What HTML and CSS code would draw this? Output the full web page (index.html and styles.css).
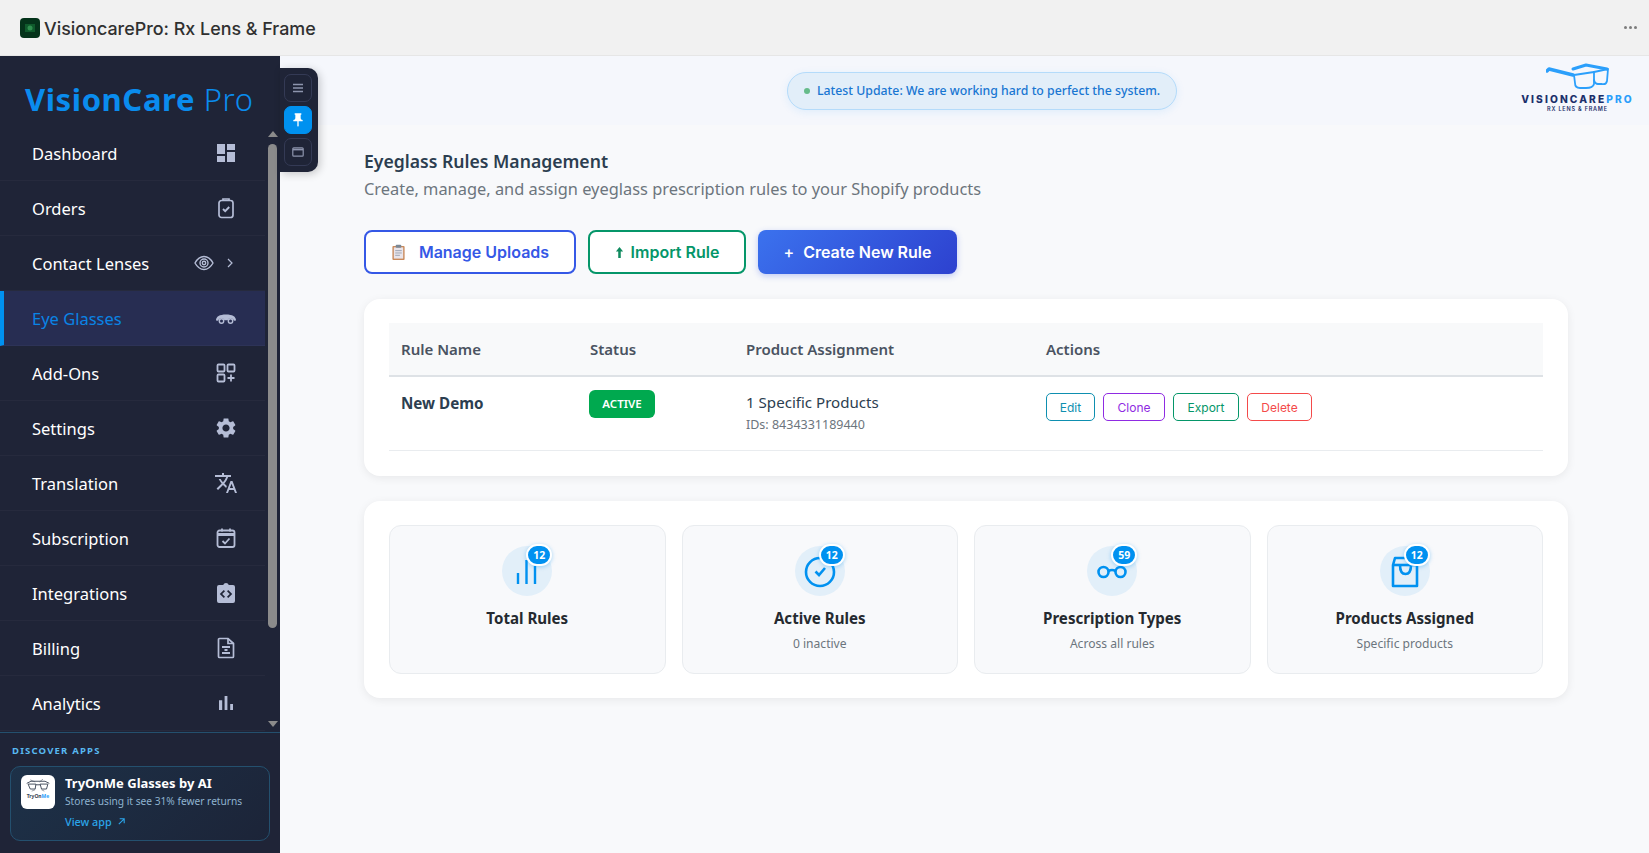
FILE: index.html
```html
<!DOCTYPE html>
<html lang="en">
<head>
  <meta charset="UTF-8">
  <title>VisioncarePro: Rx Lens &amp; Frame</title>
  <link rel="stylesheet" href="styles.css">
</head>
<body>
  <header class="topbar">
    <span class="app-icon">
      <svg viewBox="0 0 20 20" width="20" height="20"><rect x="5" y="6" width="10" height="8" fill="#0f5a2c"/><circle cx="10" cy="10" r="2.5" fill="#2f8f4f"/></svg>
    </span>
    <span class="app-title">VisioncarePro: Rx Lens &amp; Frame</span>
    <span class="more"><i></i><i></i><i></i></span>
  </header>

  <div class="layout">
    <aside class="sidebar">
      <div class="brand"><b>VisionCare</b> Pro</div>

      <nav class="nav">
        <a class="nav-item"><span>Dashboard</span>
          <svg class="nav-icon" viewBox="0 0 24 24"><path fill="currentColor" d="M3 13h8V3H3v10zm0 8h8v-6H3v6zm10 0h8V11h-8v10zm0-18v6h8V3h-8z"/></svg></a>
        <a class="nav-item"><span>Orders</span>
          <svg class="nav-icon" viewBox="0 0 24 24" fill="none" stroke="currentColor" stroke-width="1.7"><rect x="5" y="4.5" width="14" height="17" rx="2.5"/><path d="M9 4.5V3h6v1.5"/><path d="M9 13l2.2 2.2L15.2 11" stroke-width="1.9"/></svg></a>
        <a class="nav-item"><span>Contact Lenses</span>
          <span class="nav-extra">
            <svg class="eye-icon" viewBox="0 0 20 16" fill="none" stroke="currentColor" stroke-width="1.4"><path d="M1 8c2.2-4 5.4-6.5 9-6.5S16.8 4 19 8c-2.2 4-5.4 6.5-9 6.5S3.2 12 1 8z"/><circle cx="10" cy="8" r="4"/><circle cx="10" cy="8" r="1.7"/></svg>
            <svg class="chev" viewBox="0 0 6 10" fill="none" stroke="currentColor" stroke-width="1.2"><path d="M1 1l4 4-4 4"/></svg>
          </span></a>
        <a class="nav-item active"><span>Eye Glasses</span>
          <svg class="nav-icon" viewBox="0 0 24 24"><path fill="#b5bdd6" d="M2 14.5c0-4 3.5-6 10-6s10 2 10 6l-2 .3a3.500 3.500 0 0 0-6.500-.6h-3a3.500 3.500 0 0 0-6.500.6z"/><circle cx="7.500" cy="15" r="2.200" fill="none" stroke="#b5bdd6" stroke-width="1.400"/><circle cx="16.500" cy="15" r="2.200" fill="none" stroke="#b5bdd6" stroke-width="1.400"/></svg></a>
        <a class="nav-item"><span>Add-Ons</span>
          <svg class="nav-icon" viewBox="0 0 24 24" fill="none" stroke="currentColor" stroke-width="1.8"><rect x="3.500" y="3.500" width="7" height="7" rx="1"/><rect x="13.500" y="3.500" width="7" height="7" rx="1"/><rect x="3.500" y="13.500" width="7" height="7" rx="1"/><path d="M17 13.500v7M13.500 17h7"/></svg></a>
        <a class="nav-item"><span>Settings</span>
          <svg class="nav-icon" viewBox="0 0 24 24"><path fill="currentColor" d="M19.14 12.94c.04-.3.06-.61.06-.94 0-.32-.02-.64-.07-.94l2.03-1.58c.18-.14.23-.41.12-.61l-1.92-3.32c-.12-.22-.37-.29-.59-.22l-2.39.96c-.5-.38-1.03-.7-1.62-.94l-.36-2.54c-.04-.24-.24-.41-.48-.41h-3.84c-.24 0-.43.17-.47.41l-.36 2.54c-.59.24-1.13.57-1.62.94l-2.39-.96c-.22-.08-.47 0-.59.22L2.74 8.87c-.12.21-.08.47.12.61l2.03 1.58c-.05.3-.09.63-.09.94s.02.64.07.94l-2.03 1.58c-.18.14-.23.41-.12.61l1.92 3.32c.12.22.37.29.59.22l2.39-.96c.5.38 1.03.7 1.62.94l.36 2.54c.05.24.24.41.48.41h3.84c.24 0 .44-.17.47-.41l.36-2.54c.59-.24 1.13-.56 1.62-.94l2.39.96c.22.08.47 0 .59-.22l1.92-3.32c.12-.22.07-.47-.12-.61l-2.01-1.58zM12 15.6c-1.98 0-3.6-1.62-3.6-3.6s1.62-3.6 3.6-3.6 3.6 1.62 3.6 3.6-1.62 3.6-3.6 3.6z"/></svg></a>
        <a class="nav-item"><span>Translation</span>
          <svg class="nav-icon" viewBox="0 0 24 24"><path fill="currentColor" d="M12.87 15.07l-2.54-2.51.03-.03c1.74-1.94 2.98-4.17 3.71-6.53H17V4h-7V2H8v2H1v1.99h11.17C11.5 7.92 10.44 9.75 9 11.35 8.07 10.32 7.3 9.19 6.69 8h-2c.73 1.63 1.73 3.17 2.98 4.56l-5.09 5.02L4 19l5-5 3.11 3.11.76-2.04zM18.5 10h-2L12 22h2l1.12-3h4.75L21 22h2l-4.5-12zm-2.62 7l1.62-4.33L19.12 17h-3.24z"/></svg></a>
        <a class="nav-item"><span>Subscription</span>
          <svg class="nav-icon" viewBox="0 0 24 24" fill="none" stroke="currentColor" stroke-width="1.8"><rect x="3.500" y="4.500" width="17" height="16.500" rx="2"/><path d="M3.500 8.500h17" stroke-width="3"/><path d="M8 2.500v3M16 2.500v3"/><path d="M8.500 15l2.500 2.500 4.500-5"/></svg></a>
        <a class="nav-item"><span>Integrations</span>
          <svg class="nav-icon" viewBox="0 0 24 24"><path fill="currentColor" fill-rule="evenodd" d="M5 4h4.200a3 3 0 0 1 5.600 0H19a2 2 0 0 1 2 2v14a2 2 0 0 1-2 2H5a2 2 0 0 1-2-2V6a2 2 0 0 1 2-2zm6 6.200L9.800 9l-4 4 4 4 1.200-1.200L8.200 13zm2 0l2.800 2.800-2.800 2.800 1.200 1.200 4-4-4-4z"/></svg></a>
        <a class="nav-item"><span>Billing</span>
          <svg class="nav-icon" viewBox="0 0 24 24" fill="none" stroke="currentColor" stroke-width="1.7"><path d="M5.500 2.500h8.500l5.500 5v13a1 1 0 0 1-1 1h-13a1 1 0 0 1-1-1V3.500a1 1 0 0 1 1-1z"/><path d="M14 2.500v5h5.500"/><path d="M8 11h8M10.500 14h3M8 17h8" stroke-width="1.900"/></svg></a>
        <a class="nav-item"><span>Analytics</span>
          <svg class="nav-icon" viewBox="0 0 24 24"><path fill="currentColor" d="M5 9.200h3.200V19H5zM10.600 5h2.800v14h-2.800zM16.200 13H19v6h-2.800z"/></svg></a>

        <div class="scrollbar">
          <span class="arrow up"></span>
          <span class="thumb"></span>
          <span class="arrow down"></span>
        </div>
      </nav>

      <section class="discover">
        <h4>DISCOVER APPS</h4>
        <div class="app-card">
          <div class="app-thumb">
            <svg viewBox="0 0 34 20" width="24" height="15" fill="none" stroke="#3a4454" stroke-width="1.300"><path d="M1 7l6-3 20 0 6 3"/><path d="M3 8h11l-1 7H6zM20 8h11l-2 7h-7z"/><path d="M14 9h6"/><path d="M6 2l7 3M24 1l-5 4M8 18l5-2M26 18l-4-2" stroke-width=".7"/></svg>
            <span class="thumb-name">TryOn<em>Me</em></span>
          </div>
          <div class="app-info">
            <div class="app-name">TryOnMe Glasses by AI</div>
            <div class="app-desc">Stores using it see 31% fewer returns</div>
            <div class="app-link">View app
              <svg viewBox="0 0 10 10" width="9" height="9" fill="none" stroke="currentColor" stroke-width="1.200"><path d="M2 8l6-6M3 2h5v5"/></svg>
            </div>
          </div>
        </div>
      </section>
    </aside>

    <div class="rail">
      <button class="rail-btn"><svg viewBox="0 0 12 10" width="12" height="10" fill="none" stroke="currentColor" stroke-width="1.300"><path d="M1 1.500h10M1 5h10M1 8.500h10"/></svg></button>
      <button class="rail-btn on"><svg viewBox="0 0 24 24" width="16" height="16"><path fill="#fff" d="M16 9V4h1V2H7v2h1v5c0 1.660-1.340 3-3 3v2h6v7l1 1 1-1v-7h6v-2c-1.660 0-3-1.340-3-3z"/></svg></button>
      <button class="rail-btn"><svg viewBox="0 0 12 10" width="12" height="10" fill="none" stroke="currentColor" stroke-width="1.200"><rect x=".8" y=".8" width="10.400" height="8.400" rx="1"/><path d="M1 2.600h10" stroke-width="1.600"/></svg></button>
    </div>

    <main class="main">
      <div class="strip">
        <div class="notice"><i class="dot"></i>Latest Update: We are working hard to perfect the system.</div>
        <div class="logo">
          <svg class="logo-art" viewBox="0 0 63 26" width="63" height="26" fill="none" stroke="#2b9ffb" stroke-linejoin="round" stroke-linecap="round">
            <path d="M1 8l2-2 24 6" stroke-width="3.400"/>
            <path d="M27 6l13-4 21 4" stroke-width="3"/>
            <path d="M28 12l20-3v12q-1 4-8 4h-6q-5 0-5-5z" stroke-width="1.800"/>
            <path d="M48 9l14-3-1 12q-1 4-5 3h-4q-3 0-4-4" stroke-width="1.800"/>
          </svg>
          <div class="logo-name">VISIONCARE<span>PRO</span></div>
          <div class="logo-sub">RX LENS &amp; FRAME</div>
        </div>
      </div>

      <div class="content">
        <h1>Eyeglass Rules Management</h1>
        <p class="lead">Create, manage, and assign eyeglass prescription rules to your Shopify products</p>

        <div class="toolbar">
          <button class="btn btn-uploads">
            <svg viewBox="0 0 16 18" width="15" height="17"><rect x="1.500" y="2" width="13" height="15" rx="1" fill="#c98a5c"/><rect x="3" y="3.500" width="10" height="12" fill="#e9e4ea"/><rect x="5" y=".8" width="6" height="3" rx="1" fill="#7b8794"/><path d="M4.500 7h7M4.500 9.500h7M4.500 12h5" stroke="#9aa3b2" stroke-width="1"/></svg>
            Manage Uploads</button>
          <button class="btn btn-import">
            <svg viewBox="0 0 10 14" width="9" height="13"><path fill="#0f8a5f" d="M5 1l4 5H6.400v7H3.600V6H1z"/></svg>
            Import Rule</button>
          <button class="btn btn-create"><span class="plus">+</span>Create New Rule</button>
        </div>

        <section class="card table-card">
          <table class="rules">
            <thead>
              <tr>
                <th class="col-name">Rule Name</th>
                <th class="col-status">Status</th>
                <th class="col-assign">Product Assignment</th>
                <th>Actions</th>
              </tr>
            </thead>
            <tbody>
              <tr>
                <td class="rule-name">New Demo</td>
                <td><span class="badge">ACTIVE</span></td>
                <td>
                  <div class="assign">1 Specific Products</div>
                  <div class="ids">IDs: 8434331189440</div>
                </td>
                <td>
                  <div class="actions">
                    <button class="act act-edit">Edit</button>
                    <button class="act act-clone">Clone</button>
                    <button class="act act-export">Export</button>
                    <button class="act act-delete">Delete</button>
                  </div>
                </td>
              </tr>
            </tbody>
          </table>
        </section>

        <section class="card stats">
          <div class="tile">
            <div class="blob">
              <svg viewBox="0 0 50 50" width="50" height="50" fill="none" stroke="#0091f0" stroke-width="2.400"><path d="M16 38V27M24.500 38V14M33 38V20"/></svg>
              <span class="count">12</span>
            </div>
            <h3>Total Rules</h3>
          </div>
          <div class="tile">
            <div class="blob">
              <svg viewBox="0 0 50 50" width="50" height="50" fill="none" stroke="#0091f0" stroke-width="2.600"><circle cx="25" cy="26" r="14"/><path d="M20.500 25.500l3.500 3.500 6-7"/></svg>
              <span class="count">12</span>
            </div>
            <h3>Active Rules</h3>
            <p>0 inactive</p>
          </div>
          <div class="tile">
            <div class="blob">
              <svg viewBox="0 0 50 50" width="50" height="50" fill="none" stroke="#0091f0" stroke-width="2.600"><circle cx="16.500" cy="26" r="5"/><circle cx="33.500" cy="26" r="5"/><path d="M21.500 25q3.500-2 7 0"/></svg>
              <span class="count">59</span>
            </div>
            <h3>Prescription Types</h3>
            <p>Across all rules</p>
          </div>
          <div class="tile">
            <div class="blob">
              <svg viewBox="0 0 50 50" width="50" height="50" fill="none" stroke="#0091f0" stroke-width="2.600" stroke-linejoin="round"><path d="M13 19l2-7h18l4 7v21H13z"/><path d="M13 19h24"/><path d="M20 19q0 9 5.500 9T31 19"/></svg>
              <span class="count">12</span>
            </div>
            <h3>Products Assigned</h3>
            <p>Specific products</p>
          </div>
        </section>
      </div>
    </main>
  </div>
</body>
</html>
```

FILE: styles.css
```css
* {
  box-sizing: border-box;
}

html, body {
  height: 100%;
}

body {
  margin: 0;
  font-family: "Noto Sans", sans-serif;
  color: #2c3e50;
  background: #f8f9fb;
  overflow: hidden;
}

/* top bar */
.topbar {
  height: 56px;
  display: flex;
  align-items: center;
  padding: 0 12px 0 20px;
  background: #f1f1f1;
  border-bottom: 1px solid #e6e6e6;
}

.app-icon {
  width: 20px;
  height: 20px;
  border-radius: 4px;
  background: #04331a;
  margin-right: 4px;
  overflow: hidden;
}

.app-icon svg {
  display: block;
}

.app-title {
  margin-top: 1px;
  font-family: Inter, sans-serif;
  font-size: 17.9px;
  font-weight: 500;
  color: #303030;
}

.more {
  margin-left: auto;
  display: flex;
  gap: 2px;
}

.more i {
  width: 3px;
  height: 3px;
  border-radius: 50%;
  background: #7d7d7d;
}

/* layout */
.layout {
  position: relative;
  display: flex;
  height: 797px;
}

.sidebar {
  width: 280px;
  flex-shrink: 0;
  display: flex;
  flex-direction: column;
  background: #1f2437;
}

.brand {
  height: 70px;
  padding: 22px 0 0 25px;
  font-size: 31px;
  line-height: 42px;
  color: #0a8cee;
  letter-spacing: .6px;
  font-weight: 300;
}

.brand b {
  font-weight: 700;
}

.nav {
  position: relative;
  flex: 1;
  padding-right: 15px;
}

.nav-item {
  height: 55px;
  display: flex;
  align-items: center;
  justify-content: space-between;
  padding: 0 27px 0 32px;
  font-size: 16.5px;
  color: #fff;
  border-bottom: 1px solid rgba(255, 255, 255, .03);
}

.nav-item.active {
  background: #272d52;
  color: #0a84e6;
  border-left: 4px solid #0091f0;
  padding-left: 28px;
}

.nav-icon {
  width: 24px;
  height: 24px;
  color: #b5bdd6;
}

.nav-extra {
  display: flex;
  align-items: center;
  color: #b5bdd6;
}

.eye-icon {
  width: 20px;
  height: 16px;
  margin-right: 13px;
}

.chev {
  width: 6px;
  height: 10px;
  margin-right: 5px;
}

.scrollbar {
  position: absolute;
  top: 0;
  bottom: 0;
  right: 3px;
  width: 9px;
  display: flex;
  flex-direction: column;
  align-items: center;
  padding-top: 5px;
}

.thumb {
  width: 9px;
  height: 484px;
  margin: 7px 0 93px;
  border-radius: 5px;
  background: #8b8b8b;
}

.arrow {
  width: 0;
  height: 0;
  border-left: 5px solid transparent;
  border-right: 5px solid transparent;
}

.arrow.up {
  border-bottom: 6px solid #8b8b8b;
}

.arrow.down {
  border-top: 6px solid #8b8b8b;
}

/* discover apps */
.discover {
  height: 121px;
  padding: 0 10px;
  border-top: 1px solid #24506e;
}

.discover h4 {
  margin: 11px 0 8px 2px;
  font-size: 9.5px;
  line-height: 14px;
  font-weight: 700;
  letter-spacing: 1.2px;
  color: #58b8f0;
}

.app-card {
  height: 75px;
  display: flex;
  gap: 10px;
  padding: 8px 10px;
  border: 1px solid #24506e;
  border-radius: 10px;
  background: linear-gradient(135deg, #1d3148, #1c2438);
}

.app-thumb {
  width: 34px;
  height: 34px;
  flex-shrink: 0;
  border-radius: 6px;
  background: #fff;
  display: flex;
  flex-direction: column;
  align-items: center;
  padding-top: 3px;
}

.thumb-name {
  font-size: 5px;
  line-height: 7px;
  font-weight: 700;
  color: #3a4454;
}

.thumb-name em {
  font-style: normal;
  color: #2b9ffb;
}

.app-name {
  font-size: 13px;
  line-height: 16px;
  font-weight: 700;
  color: #fff;
}

.app-desc {
  font-size: 10.2px;
  line-height: 18px;
  margin-top: 1px;
  color: #8fb3cf;
}

.app-link {
  margin-top: 4px;
  font-size: 10.8px;
  line-height: 16px;
  font-weight: 500;
  color: #2ba5ea;
}

.app-link svg {
  margin-left: 3px;
}

/* floating rail, sits over the edge of the main area */
.rail {
  position: absolute;
  top: 12px;
  left: 280px;
  width: 38px;
  height: 104px;
  display: flex;
  flex-direction: column;
  gap: 4px;
  padding: 6px 6px 6px 4px;
  background: #1f2437;
  border-radius: 0 10px 10px 0;
  box-shadow: 2px 2px 8px rgba(0, 0, 0, .2);
}

.rail-btn {
  width: 28px;
  height: 28px;
  padding: 0;
  display: flex;
  align-items: center;
  justify-content: center;
  border: 1px solid #343a55;
  border-radius: 7px;
  background: transparent;
  color: #8d94ad;
}

.rail-btn.on {
  background: #0091f0;
  border-color: #0091f0;
}

/* main */
.main {
  flex: 1;
  min-width: 0;
}

.strip {
  height: 69px;
  display: flex;
  align-items: center;
  padding: 0 14px 0 507px;
  background: #f5f7fc;
}

.notice {
  width: 390px;
  height: 38px;
  display: flex;
  align-items: center;
  padding-left: 16px;
  font-size: 12.3px;
  font-weight: 500;
  color: #1976d2;
  background: #e2eef9;
  border: 1px solid #b4dbfa;
  border-radius: 19px;
  box-shadow: 0 2px 8px rgba(33, 150, 243, .1);
}

.dot {
  width: 6px;
  height: 6px;
  margin-right: 7px;
  border-radius: 50%;
  background: #66bb8a;
}

.logo {
  margin-left: auto;
  width: 115px;
  display: flex;
  flex-direction: column;
  align-items: center;
}

.logo-art {
  margin-top: -4px;
}

.logo-name {
  margin-top: 5px;
  font-family: Inter, sans-serif;
  font-size: 10.2px;
  line-height: 11px;
  font-weight: 800;
  letter-spacing: 2.1px;
  color: #1c2f6b;
  white-space: nowrap;
}

.logo-name span {
  color: #2b9ffb;
}

.logo-sub {
  font-family: Inter, sans-serif;
  font-size: 5.5px;
  line-height: 9px;
  font-weight: 600;
  letter-spacing: .8px;
  color: #1c2f6b;
}

.content {
  padding: 23px 81px 0 84px;
}

h1 {
  margin: 0;
  font-size: 17.6px;
  line-height: 26px;
  font-weight: 600;
  color: #2c3e50;
}

.lead {
  margin: 2px 0 0;
  font-size: 16.4px;
  line-height: 26px;
  color: #6c757d;
}

.toolbar {
  display: flex;
  gap: 12px;
  margin-top: 28px;
}

.btn {
  height: 44px;
  display: flex;
  align-items: center;
  justify-content: center;
  font-family: Inter, sans-serif;
  font-size: 16px;
  font-weight: 600;
  border-radius: 8px;
  background: #fff;
}

.btn-uploads {
  width: 212px;
  gap: 13px;
  border: 2px solid #3558e6;
  color: #3558e6;
}

.btn-import {
  width: 158px;
  gap: 7px;
  border: 2px solid #059669;
  color: #059669;
}

.btn-create {
  width: 199px;
  gap: 9px;
  border: 0;
  color: #fff;
  background: linear-gradient(135deg, #3b72ee, #2d41cf);
  box-shadow: 0 2px 6px rgba(59, 93, 230, .3);
}

.plus {
  font-weight: 500;
}

.card {
  background: #fff;
  border-radius: 16px;
  box-shadow: 0 2px 10px rgba(0, 0, 0, .07);
}

.table-card {
  height: 177px;
  margin-top: 25px;
  padding: 24px 25px 0;
}

.rules {
  width: 100%;
  border-collapse: collapse;
}

.rules th {
  height: 53px;
  padding: 0 12px;
  text-align: left;
  font-size: 15px;
  font-weight: 600;
  color: #4a5361;
  background: #f8f9fa;
  border-bottom: 2px solid #dee2e6;
}

.col-name {
  width: 189px;
}

.col-status {
  width: 156px;
}

.col-assign {
  width: 300px;
}

.rules td {
  height: 74px;
  padding: 13px 12px 0;
  vertical-align: top;
  border-bottom: 1px solid #e9ecef;
}

.rules .rule-name {
  font-size: 15.2px;
  line-height: 26px;
  font-weight: 700;
  color: #2c3e50;
}

.badge {
  display: inline-block;
  width: 66px;
  height: 28px;
  margin-left: -1px;
  border-radius: 6px;
  background: #00a94f;
  color: #fff;
  text-align: center;
  font-size: 11.5px;
  line-height: 28px;
  font-weight: 600;
}

.assign {
  font-size: 15.1px;
  line-height: 25px;
  color: #2c3e50;
}

.ids {
  font-size: 12.5px;
  line-height: 16px;
  margin-top: 2px;
  color: #6c757d;
}

.actions {
  display: flex;
  gap: 8px;
  margin-top: 3px;
}

.act {
  height: 28px;
  padding: 0;
  font-family: Inter, sans-serif;
  font-size: 12px;
  background: #fff;
  border-radius: 5px;
  border: 1px solid;
}

.act-edit {
  width: 49px;
  color: #0e8fb0;
}

.act-clone {
  width: 62px;
  color: #8f2be2;
}

.act-export {
  width: 66px;
  color: #059669;
}

.act-delete {
  width: 65px;
  color: #f44a4a;
}

.stats {
  height: 197px;
  margin-top: 25px;
  padding: 24px 25px;
  display: grid;
  grid-template-columns: repeat(4, 1fr);
  gap: 16px;
}

.tile {
  height: 149px;
  padding-top: 20px;
  text-align: center;
  background: #f8f9fb;
  border: 1px solid #e9ecef;
  border-radius: 12px;
}

.blob {
  position: relative;
  width: 50px;
  height: 50px;
  margin: 0 auto;
  border-radius: 50%;
  background: #e2eff9;
}

.blob svg {
  display: block;
}

.count {
  position: absolute;
  top: -2px;
  left: 24px;
  min-width: 26px;
  height: 22px;
  border: 2px solid #fff;
  border-radius: 11px;
  background: #0091f0;
  color: #fff;
  font-size: 10.5px;
  line-height: 18px;
  font-weight: 700;
  box-shadow: 0 1px 4px rgba(0, 145, 240, .35);
}

.tile h3 {
  margin: 11px 0 0;
  font-size: 15.1px;
  line-height: 22px;
  font-weight: 700;
  color: #252a30;
}

.tile p {
  margin: 5px 0 0;
  font-size: 12.1px;
  line-height: 20px;
  color: #6c757d;
}
```
